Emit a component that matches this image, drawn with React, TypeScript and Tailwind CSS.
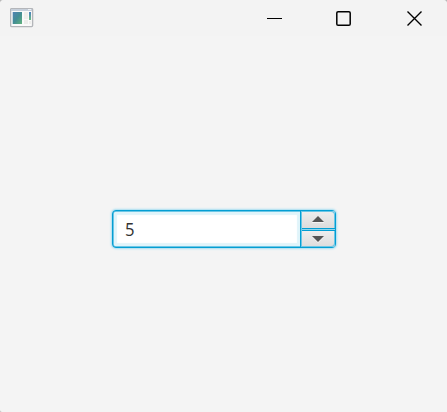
function AppIcon() {
  return (
    <svg width="24" height="20" viewBox="0 0 24 20">
      <defs>
        <linearGradient id="screen" x1="0" y1="0" x2="1" y2="1">
          <stop offset="0" stopColor="#5183b4" />
          <stop offset="0.5" stopColor="#438d94" />
          <stop offset="1" stopColor="#62b37d" />
        </linearGradient>
        <linearGradient id="bar" x1="0" y1="0" x2="0" y2="1">
          <stop offset="0" stopColor="#4a7fc0" />
          <stop offset="1" stopColor="#6abd80" />
        </linearGradient>
      </defs>
      <rect x="0.6" y="0.6" width="22" height="18" rx="1" fill="#fafafa" stroke="#b4b6ba" strokeWidth="1.4" />
      <rect x="1" y="1" width="21" height="2" fill="#c6cfda" />
      <rect x="18" y="1" width="3" height="1" fill="#edf1f5" />
      <rect x="2.7" y="4" width="9.3" height="12" fill="url(#screen)" />
      <rect x="14" y="4" width="4" height="7" fill="#f0efeb" />
      <rect x="14" y="12" width="4" height="4" fill="#ececea" />
      <rect x="19" y="4" width="2" height="8" fill="url(#bar)" />
      <rect x="19" y="13" width="2" height="3" fill="#eeeeec" />
    </svg>
  );
}

function TitleBar() {
  return (
    <header className="flex h-9 items-start bg-[#f3f3f3] pl-[10px] pt-2">
      <AppIcon />
      <div className="ml-[233px] flex pt-[3px]">
        <svg width="16" height="16" viewBox="0 0 16 16">
          <path d="M0 7.5H15" stroke="#000" />
        </svg>
        <svg className="ml-[53px]" width="16" height="16" viewBox="0 0 16 16">
          <rect x="0.8" y="0.8" width="13.4" height="13.4" rx="1.3" fill="none" stroke="#000" strokeWidth="1.5" />
        </svg>
        <svg className="ml-[55px]" width="16" height="16" viewBox="0 0 16 16">
          <path d="M0.5 0.5L14.5 14.5M14.5 0.5L0.5 14.5" stroke="#000" strokeWidth="1.4" />
        </svg>
      </div>
    </header>
  );
}

function Spinner() {
  return (
    <div className="flex h-[38px] w-[224px] rounded-[4px] border border-[#039ed3] bg-[#6cc6e5] p-px shadow-[0_0_2px_1px_#a4def1]">
      <div className="flex flex-1 items-start rounded-l-[2px] bg-white pl-[11px] pt-[8px] text-[18.5px] text-[#323232] shadow-[inset_0_0_1px_3px_#e0f4fa]">
        <span className="origin-left scale-x-[0.9] font-['Open_Sans','Noto_Sans',sans-serif] font-normal leading-none">5</span>
      </div>
      <div className="-my-px -mr-px flex w-[35px] flex-col border-l border-[#039ed3] bg-[#6cc6e5] pl-px">
        <button className="flex h-[18px] items-start justify-center rounded-tr-[3px] border-b border-[#039ed3] bg-linear-to-b from-[#eeeeee] to-[#dcdcdc] pr-[2px] pt-[5px] shadow-[inset_-1px_1px_0_#6cc6e5]">
          <svg width="12" height="7" viewBox="0 0 12 7">
            <path d="M0 7L0 6H12V7Z" fill="#f4f4f4" />
            <path d="M0 6L6 0L12 6Z" fill="#555555" />
          </svg>
        </button>
        <div className="h-px bg-[#8fd5ec]" />
        <button className="flex flex-1 items-start justify-center rounded-br-[3px] border-t border-[#039ed3] bg-linear-to-b from-[#eeeeee] to-[#dcdcdc] pr-[2px] pt-[5px] shadow-[inset_-1px_-1px_0_#6cc6e5]">
          <svg width="12" height="7" viewBox="0 0 12 7">
            <path d="M0 1L6 7L12 1Z" fill="#f4f4f4" />
            <path d="M0 0L6 6L12 0Z" fill="#555555" />
          </svg>
        </button>
      </div>
    </div>
  );
}

export default function App() {
  return (
    <div className="bg-[#b8b8b8]">
      <div className="flex h-[412px] w-[447px] flex-col overflow-hidden rounded-t-[4px] rounded-bl-[2px] bg-[#f4f4f4]">
        <TitleBar />
        <main className="flex flex-1 items-start pl-[112px] pt-[174px]">
          <Spinner />
        </main>
      </div>
    </div>
  );
}
